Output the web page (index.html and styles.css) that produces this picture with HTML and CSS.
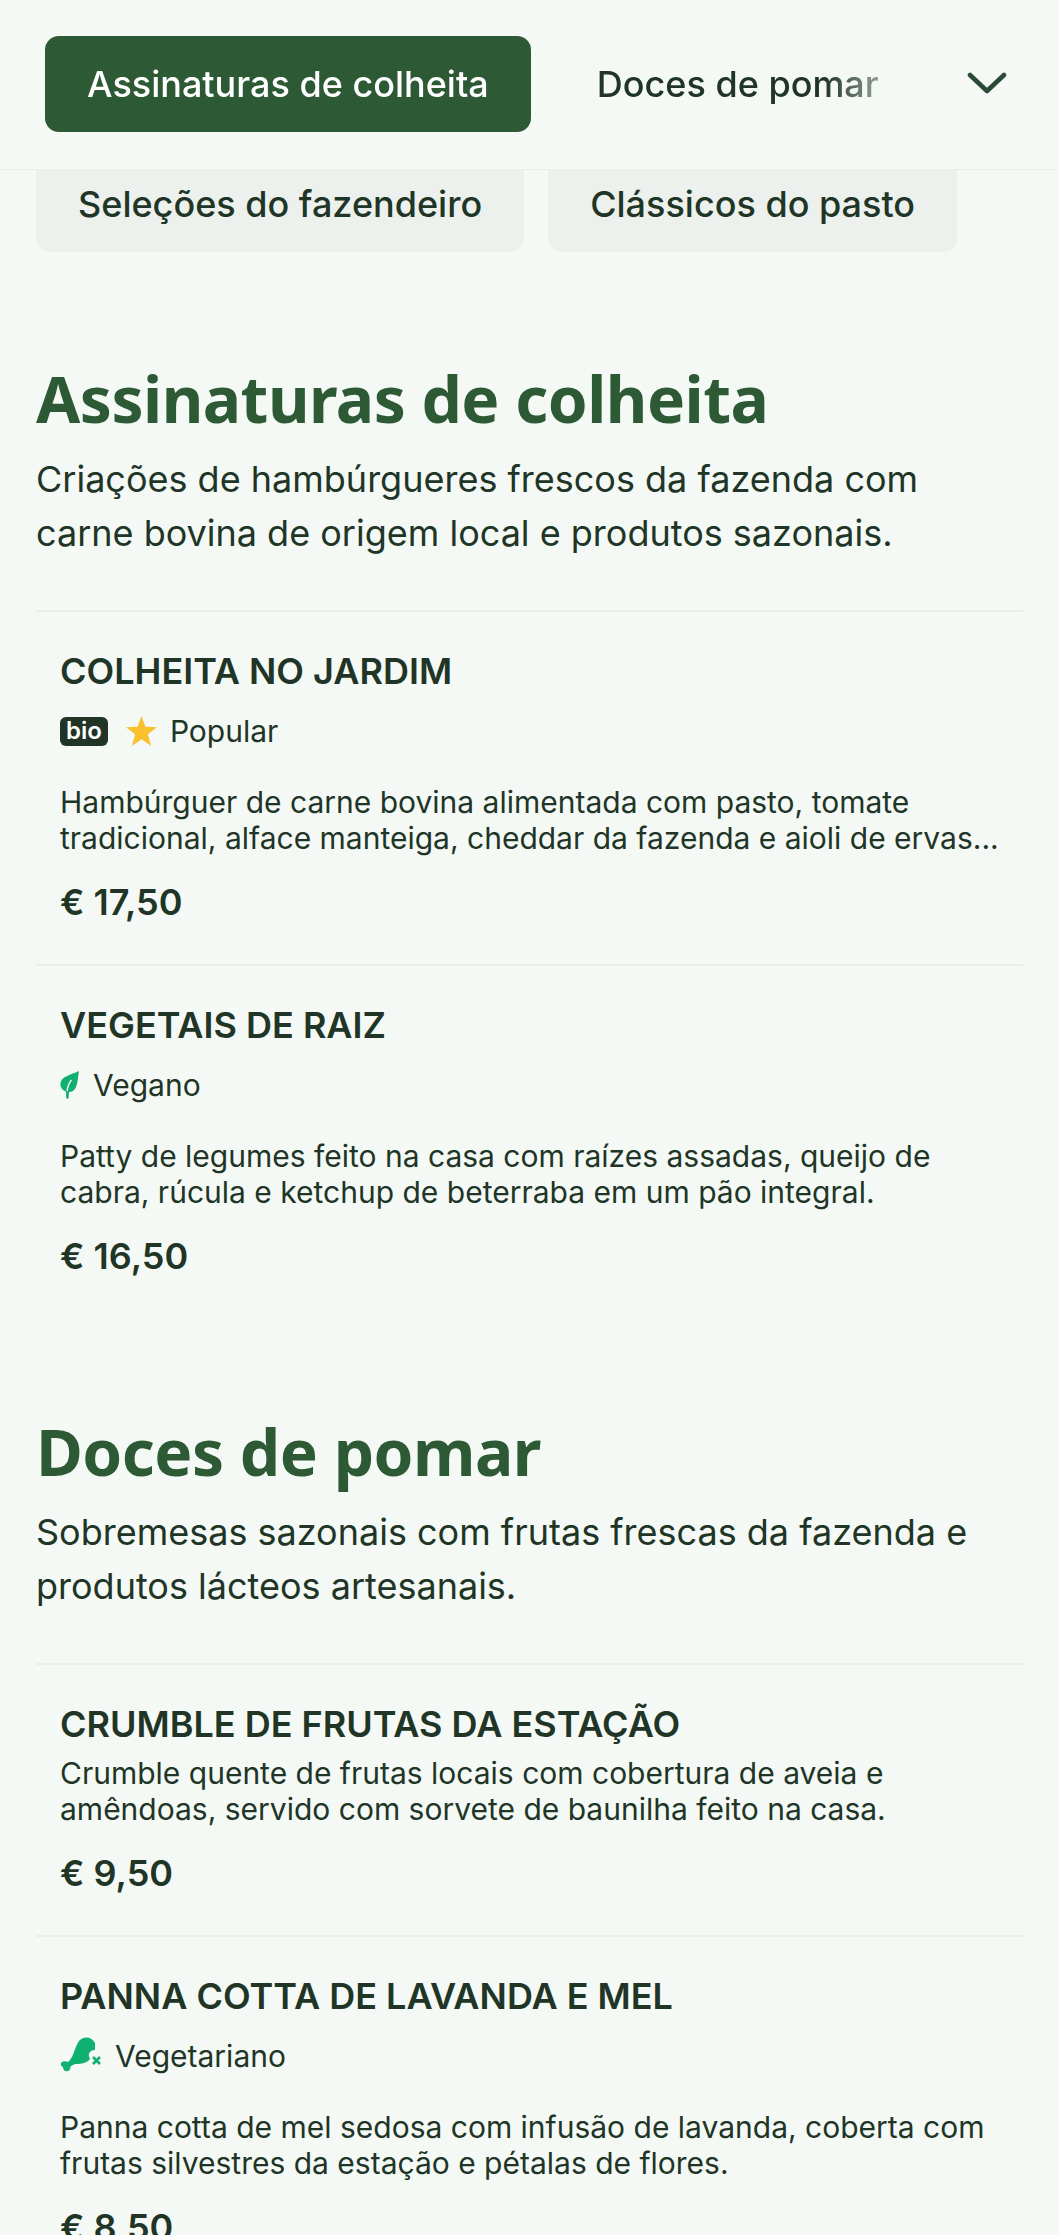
FILE: index.html
```html
<!DOCTYPE html>
<html lang="pt">
<head>
    <meta charset="UTF-8">
    <meta name="viewport" content="width=device-width, initial-scale=1.0">
    <title>Menu</title>
    <link rel="stylesheet" href="styles.css">
</head>
<body>
    <!-- Sticky category bar -->
    <header class="tab-bar">
        <nav class="tabs">
            <a class="tab tab-active" href="#colheita">Assinaturas de colheita</a>
            <a class="tab" href="#pomar">Doces de pomar</a>
        </nav>
        <button class="tab-toggle" type="button" aria-label="Mais categorias">
            <svg viewBox="0 0 40 22" width="40" height="22" fill="none" stroke="#2a4a36" stroke-width="4.6" stroke-linecap="round" stroke-linejoin="round">
                <path d="M3 3 L20 19 L37 3"/>
            </svg>
        </button>
    </header>

    <div class="pills">
        <a class="pill" href="#selecoes">Seleções do fazendeiro</a>
        <a class="pill" href="#classicos">Clássicos do pasto</a>
    </div>

    <main>
        <!-- Harvest signatures -->
        <section class="menu-section" id="colheita">
            <h2>Assinaturas de colheita</h2>
            <p class="section-desc">Criações de hambúrgueres frescos da fazenda com carne bovina de origem local e produtos sazonais.</p>

            <article class="item">
                <h3>COLHEITA NO JARDIM</h3>
                <div class="tags">
                    <span class="bio">bio</span>
                    <svg class="star" viewBox="0 0 30 29" width="31" height="30"><path fill="#fbc02d" d="M15 0 L18.800 10.300 L30 10.800 L21.200 17.700 L24.300 29 L15 22.500 L5.700 29 L8.800 17.700 L0 10.800 L11.200 10.300 Z"/></svg>
                    <span class="tag-label">Popular</span>
                </div>
                <p class="item-desc">Hambúrguer de carne bovina alimentada com pasto, tomate tradicional, alface manteiga, cheddar da fazenda e aioli de ervas...</p>
                <div class="price">€ 17,50</div>
            </article>

            <article class="item">
                <h3>VEGETAIS DE RAIZ</h3>
                <div class="tags tags-tight">
                    <svg viewBox="0 0 19 28" width="19" height="28"><path fill="#10b070" d="M19 0 C18 5 18 11 16 16 C15 19 12 21 9 21 L8.6 27 C8.5 28 6.2 28 6.2 27 L6 20.6 C2 19 0 16 .5 12 C1.5 5 11 4 19 0 Z"/><path fill="none" stroke="#f4f9f5" stroke-width="1.4" d="M7.2 20 C7.5 16 9 12 11.5 9"/></svg>
                    <span>Vegano</span>
                </div>
                <p class="item-desc">Patty de legumes feito na casa com raízes assadas, queijo de cabra, rúcula e ketchup de beterraba em um pão integral.</p>
                <div class="price">€ 16,50</div>
            </article>
        </section>

        <!-- Orchard sweets -->
        <section class="menu-section" id="pomar">
            <h2>Doces de pomar</h2>
            <p class="section-desc">Sobremesas sazonais com frutas frescas da fazenda e produtos lácteos artesanais.</p>

            <article class="item">
                <h3>CRUMBLE DE FRUTAS DA ESTAÇÃO</h3>
                <p class="item-desc item-desc-tight">Crumble quente de frutas locais com cobertura de aveia e amêndoas, servido com sorvete de baunilha feito na casa.</p>
                <div class="price">€ 9,50</div>
            </article>

            <article class="item">
                <h3>PANNA COTTA DE LAVANDA E MEL</h3>
                <div class="tags tags-tight">
                    <svg viewBox="0 0 41 38" width="41" height="38"><path fill="#10b070" d="M35 6 C31 -1 23 -1 19 4 C15 10 14 18 10 23 L8 25 C4 23 0 25 1 28 C1.500 29 2 30 3 30 C3 33 5 35 8 34 C11 33 10 30 11 29 L15 27 C22 27 27 26 30 22 C27 17 30 13 35 13 Z"/><path fill="none" stroke="#10b070" stroke-width="2.600" d="M33 20 L40 27 M40 20 L33 27"/></svg>
                    <span>Vegetariano</span>
                </div>
                <p class="item-desc">Panna cotta de mel sedosa com infusão de lavanda, coberta com frutas silvestres da estação e pétalas de flores.</p>
                <div class="price">€ 8,50</div>
            </article>
        </section>
    </main>
</body>
</html>
```
FILE: styles.css
```css
/* General Styles */
html, body {
    height: 100%;
    overflow: hidden;
}
body {
    margin: 0;
    font-family: Inter, "Liberation Sans", sans-serif;
    background-color: #f4f9f5;
    color: #213527;
}
a {
    color: inherit;
    text-decoration: none;
}

/* Header */
.tab-bar {
    position: sticky;
    top: 0;
    z-index: 10;
    box-sizing: border-box;
    height: 170px;
    display: flex;
    align-items: flex-start;
    justify-content: space-between;
    padding: 36px 52px 0 45px;
    background-color: #f4f9f5;
    border-bottom: 1px solid #e9efea;
}
.tabs {
    display: flex;
    gap: 24px;
    width: 840px;
    overflow: hidden;
    -webkit-mask-image: linear-gradient(to right, #000 780px, transparent 880px);
    mask-image: linear-gradient(to right, #000 780px, transparent 880px);
}
.tab {
    flex: none;
    height: 96px;
    display: flex;
    align-items: center;
    padding: 0 42px;
    border-radius: 14px;
    font-size: 36px;
    font-weight: 500;
    white-space: nowrap;
}
.tab-active {
    background-color: #2d5a35;
    color: #fff;
}
.tab-toggle {
    padding: 0;
    margin-top: 36px;
    border: none;
    background: none;
    line-height: 0;
}

/* Pills under the header */
.pills {
    display: flex;
    gap: 24px;
    margin-top: -14px;
    margin-bottom: 109px;
    padding: 0 36px;
}
.pill {
    height: 96px;
    display: flex;
    align-items: center;
    padding: 0 42px;
    border-radius: 14px;
    background-color: #ecf1ed;
    font-size: 36px;
    font-weight: 500;
    white-space: nowrap;
}

/* Sections */
.menu-section {
    padding: 0 36px;
    margin-top: 96px;
}
h2 {
    margin: 0 0 15px;
    font-family: "Noto Sans", sans-serif;
    font-size: 64px;
    font-weight: 700;
    letter-spacing: -0.5px;
    line-height: 76px;
    color: #2d5a35;
}
.section-desc {
    margin: 0 0 50px;
    font-size: 36px;
    line-height: 54px;
}

/* Items */
.item {
    padding: 24px 24px 40px;
    border-top: 2px solid #e9efea;
}
.item h3 {
    margin: 0;
    font-size: 36px;
    font-weight: 600;
    line-height: 70px;
}
.tags {
    display: flex;
    align-items: center;
    gap: 18px;
    height: 30px;
    margin: 10px 0 38px;
    font-size: 30px;
}
.tags-tight {
    gap: 14px;
}
.tag-label {
    margin-left: -5px;
}
.bio {
    padding: 0 6px;
    height: 29px;
    line-height: 28px;
    border-radius: 6px;
    background-color: #213527;
    color: #fff;
    font-size: 24px;
    font-weight: 600;
}
.item-desc {
    margin: 0;
    font-size: 30px;
    line-height: 36px;
}
.item-desc-tight {
    margin-top: -4px;
}
.price {
    margin-top: 24px;
    font-size: 36px;
    font-weight: 600;
    line-height: 44px;
}
```
